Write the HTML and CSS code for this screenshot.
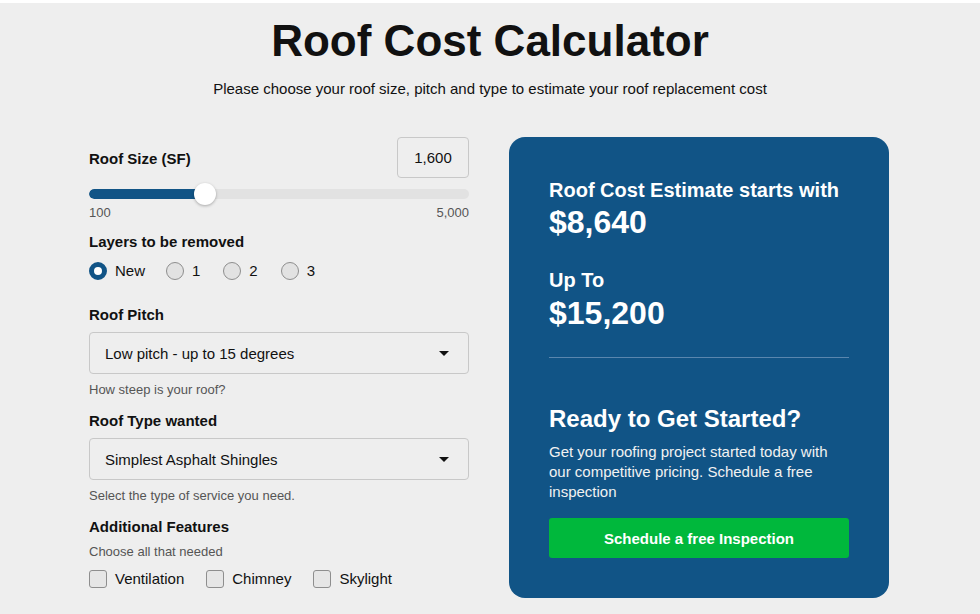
FILE: index.html
```html
<!DOCTYPE html>
<html lang="en">
<head>
<meta charset="utf-8">
<title>Roof Cost Calculator</title>
<link rel="stylesheet" href="styles.css">
</head>
<body>
<div class="page">
  <header class="hero">
    <h1 class="title">Roof Cost Calculator</h1>
    <p class="subtitle">Please choose your roof size, pitch and type to estimate your roof replacement cost</p>
  </header>

  <main class="layout">
    <section class="form">
      <div class="size-row">
        <span class="label">Roof Size (SF)</span>
        <div class="num-input">1,600</div>
      </div>
      <div class="slider">
        <div class="track"><div class="fill" style="width:116px"></div></div>
        <div class="thumb" style="left:105px"></div>
      </div>
      <div class="range-labels"><span>100</span><span>5,000</span></div>

      <div class="label layers-label">Layers to be removed</div>
      <div class="options radios">
        <label class="opt"><span class="radio checked"></span>New</label>
        <label class="opt"><span class="radio"></span>1</label>
        <label class="opt"><span class="radio"></span>2</label>
        <label class="opt"><span class="radio"></span>3</label>
      </div>

      <div class="label section-label">Roof Pitch</div>
      <div class="select">
        <span>Low pitch - up to 15 degrees</span>
        <span class="caret"></span>
      </div>
      <div class="help">How steep is your roof?</div>

      <div class="label section-label2">Roof Type wanted</div>
      <div class="select">
        <span>Simplest Asphalt Shingles</span>
        <span class="caret"></span>
      </div>
      <div class="help">Select the type of service you need.</div>

      <div class="label section-label2">Additional Features</div>
      <div class="help help-tight">Choose all that needed</div>
      <div class="options checks">
        <label class="opt"><span class="check"></span>Ventilation</label>
        <label class="opt"><span class="check"></span>Chimney</label>
        <label class="opt"><span class="check"></span>Skylight</label>
      </div>
    </section>

    <aside class="card">
      <div class="card-label">Roof Cost Estimate starts with</div>
      <div class="price">$8,640</div>
      <div class="card-label upto">Up To</div>
      <div class="price price2">$15,200</div>
      <hr class="divider">
      <h2 class="cta-title">Ready to Get Started?</h2>
      <p class="cta-text">Get your roofing project started today with our competitive pricing. Schedule a free inspection</p>
      <button class="cta-btn">Schedule a free Inspection</button>
    </aside>
  </main>
</div>
</body>
</html>
```

FILE: styles.css
```css
html {
  background: #ffffff;
}
body {
  margin: 3px 0 0;
  background: #eeeeee;
  min-height: 611px;
  font-family: "Liberation Sans", Arial, sans-serif;
  color: #111;
}
.page {
  padding-top: 14px;
}
.hero {
  text-align: center;
}
.title {
  margin: 0;
  font-size: 44px;
  line-height: 48px;
  font-weight: 700;
  color: #111;
}
.subtitle {
  margin: 15px 0 0;
  font-size: 15px;
  line-height: 18px;
  color: #111;
}
.layout {
  width: 800px;
  margin: 39px 0 0 calc(50% - 401px);
  display: flex;
  gap: 40px;
  align-items: flex-start;
}
.form {
  width: 380px;
  display: flex;
  flex-direction: column;
}
.label {
  font-size: 15px;
  line-height: 17px;
  font-weight: 700;
  color: #111;
}
.size-row {
  display: flex;
  justify-content: space-between;
  align-items: center;
  height: 41px;
}
.size-row .label {
  padding-top: 1px;
}
.num-input {
  box-sizing: border-box;
  width: 72px;
  height: 41px;
  border: 1px solid #c8c8c8;
  border-radius: 4px;
  display: flex;
  align-items: center;
  justify-content: center;
  font-size: 15px;
  color: #111;
}
.slider {
  position: relative;
  margin-top: 11px;
  height: 10px;
}
.track {
  height: 10px;
  border-radius: 5px;
  background: #e2e2e2;
  overflow: hidden;
}
.fill {
  height: 100%;
  background: #115486;
  border-radius: 5px;
}
.thumb {
  position: absolute;
  top: -6px;
  width: 22px;
  height: 22px;
  border-radius: 50%;
  background: #fff;
  box-shadow: 0 1px 3px rgba(0,0,0,0.3);
}
.range-labels {
  display: flex;
  justify-content: space-between;
  margin-top: 6px;
  font-size: 13px;
  line-height: 15px;
  color: #555;
}
.layers-label {
  margin-top: 13px;
}
.options {
  display: flex;
  align-items: center;
  font-size: 15px;
  line-height: 18px;
  color: #111;
}
.radios {
  margin-top: 12px;
}
.opt {
  display: flex;
  align-items: center;
  gap: 8px;
}
.radios .opt { margin-right: 23px; }
.radios .opt:first-child { margin-right: 21px; }
.radio {
  box-sizing: border-box;
  width: 18px;
  height: 18px;
  border-radius: 50%;
  border: 1px solid #8e8e8e;
  background: #e2e2e2;
}
.radio.checked {
  border: 5px solid #115486;
  background: #fff;
}
.section-label {
  margin-top: 26px;
}
.section-label2 {
  margin-top: 15px;
}
.select {
  box-sizing: border-box;
  margin-top: 9px;
  height: 42px;
  border: 1px solid #c8c8c8;
  border-radius: 4px;
  display: flex;
  align-items: center;
  justify-content: space-between;
  padding: 0 19px 0 15px;
  font-size: 15px;
  color: #111;
}
.caret {
  width: 0;
  height: 0;
  border-left: 5px solid transparent;
  border-right: 5px solid transparent;
  border-top: 5px solid #111;
}
.help {
  margin-top: 8px;
  font-size: 13px;
  line-height: 15px;
  color: #555;
}
.help-tight {
  margin-top: 9px;
}
.checks {
  margin-top: 11px;
}
.checks .opt { margin-right: 22px; }
.check {
  box-sizing: border-box;
  width: 18px;
  height: 18px;
  border-radius: 3px;
  border: 1px solid #8e8e8e;
  background: #e6e6e6;
}
.card {
  box-sizing: border-box;
  width: 380px;
  background: #115486;
  border-radius: 16px;
  padding: 41px 40px 40px;
  color: #fff;
  display: flex;
  flex-direction: column;
}
.card-label {
  font-size: 20px;
  line-height: 24px;
  font-weight: 700;
}
.price {
  margin-top: 1px;
  font-size: 32px;
  line-height: 38px;
  font-weight: 700;
}
.upto {
  margin-top: 27px;
}
.price2 {
  margin-top: 2px;
}
.divider {
  margin: 25px 0 0;
  border: 0;
  height: 1px;
  background: #5a86ae;
}
.cta-title {
  margin: 46px 0 0;
  font-size: 24px;
  line-height: 30px;
  font-weight: 700;
}
.cta-text {
  margin: 8px 0 0;
  font-size: 15px;
  line-height: 20px;
  color: #f2f2f2;
}
.cta-btn {
  margin-top: 16px;
  height: 40px;
  border: 0;
  border-radius: 3px;
  background: #00b83c;
  color: #fff;
  font-family: inherit;
  font-size: 15px;
  font-weight: 700;
}
```
